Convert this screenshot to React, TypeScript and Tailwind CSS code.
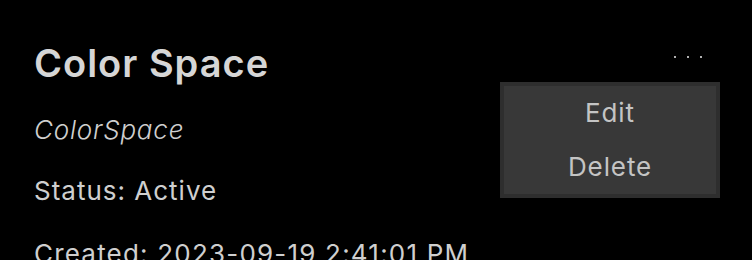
import React from "react";

export default function App() {
  return (
    <div
      className="w-[752px] h-[260px] overflow-hidden bg-black text-[#cfcfcf]"
      style={{ fontFamily: "Inter, 'Noto Sans', sans-serif" }}
    >
      <div className="flex justify-between pl-[34px] pr-[32px] pt-[38px]">
        <div className="flex flex-col whitespace-nowrap">
          <h2 className="text-[38px] leading-[50px] font-semibold tracking-[1px] text-[#d6d6d6]">
            Color Space
          </h2>
          <p className="mt-[24px] text-[26px] leading-[36px] italic font-light tracking-[0.8px]">
            ColorSpace
          </p>
          <p className="mt-[25px] text-[26px] leading-[36px] tracking-[1px]">
            Status: Active
          </p>
          <p className="mt-[27px] text-[26px] leading-[36px] tracking-[1.2px]">
            Created: 2023-09-19 2:41:01 PM
          </p>
        </div>
        <div className="relative flex flex-col items-end">
          <button className="mt-[4px] mr-[16px] flex gap-[11px] px-[2px] py-[14px]">
            <span className="w-[2px] h-[2px] bg-[#b0b0b0]" />
            <span className="w-[2px] h-[2px] bg-[#b0b0b0]" />
            <span className="w-[2px] h-[2px] bg-[#b0b0b0]" />
          </button>
          <div className="absolute top-[44px] right-0 w-[220px] border-4 border-[#2e2e2e] bg-[#383838] flex flex-col items-center text-[26px] tracking-[0.9px] text-[#c4c4c4]">
            <span className="leading-[54px]">Edit</span>
            <span className="leading-[54px]">Delete</span>
          </div>
        </div>
      </div>
    </div>
  );
}
